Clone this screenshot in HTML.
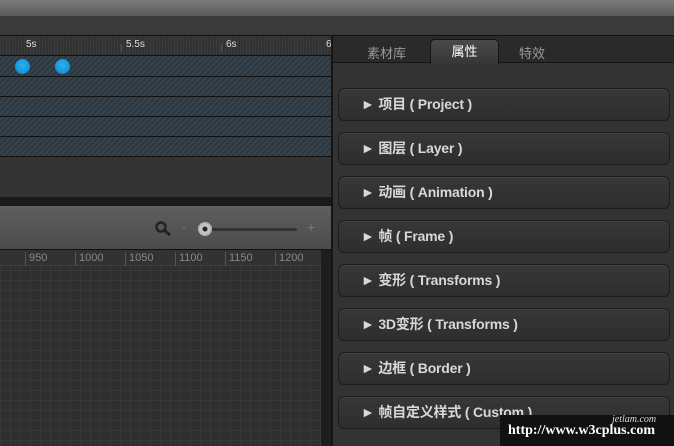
<html><head><style>
body{margin:0;width:674px;height:446px;overflow:hidden;background:#333;font-family:"Liberation Sans","Noto Sans CJK SC",sans-serif;position:relative}
div{position:absolute;box-sizing:border-box}
.hatch{background:repeating-linear-gradient(135deg,#36434d 0 2px,#2d3740 2px 4px)}
.tk{color:#ddd;font-size:10px;top:39px}
.dot{width:15px;height:15px;border-radius:50%;background:radial-gradient(circle at 50% 40%,#2ab0f0,#0a88cc);top:59px}
.acc{left:338px;width:332px;height:33px;border:1px solid #1c1c1c;border-radius:6px;background:linear-gradient(#373737,#2e2e2e);box-shadow:inset 0 1px 0 #444;color:#d8d8d8;font-weight:bold;font-size:14px;line-height:31px;padding-left:22px;letter-spacing:-0.2px}
.r{color:#888;font-size:11px;top:252px;border-left:1px solid #555;padding-left:3px;height:14px;line-height:13px}
</style></head><body>
<div style="left:0;top:0;width:674px;height:16px;background:linear-gradient(#7a7a7a,#5a5a5a)"></div>
<div style="left:0;top:16px;width:674px;height:20px;background:#3a3a3a"></div>
<div style="left:0;top:35px;width:332px;height:21px;background:repeating-linear-gradient(90deg,#3c3c3c 0 1px,#323232 1px 3px);border-top:1px solid #111;border-bottom:1px solid #111"></div>
<div class="tk" style="left:26px">5s</div><div class="tk" style="left:126px">5.5s</div><div class="tk" style="left:226px">6s</div><div class="tk" style="left:326px">6</div>
<div style="left:121px;top:44px;width:1px;height:8px;background:#555"></div>
<div style="left:221px;top:44px;width:1px;height:8px;background:#555"></div>
<div class="hatch" style="left:0;top:56px;width:331px;height:100px"></div>
<div style="left:0;top:76px;width:331px;height:1px;background:#111"></div>
<div style="left:0;top:96px;width:331px;height:1px;background:#111"></div>
<div style="left:0;top:116px;width:331px;height:1px;background:#111"></div>
<div style="left:0;top:136px;width:331px;height:1px;background:#111"></div>
<div style="left:0;top:156px;width:331px;height:1px;background:#111"></div>
<div class="dot" style="left:15px"></div><div class="dot" style="left:55px"></div>
<div style="left:0;top:197px;width:332px;height:9px;background:#1a1a1a"></div>
<div style="left:0;top:206px;width:332px;height:44px;background:linear-gradient(#5e5e5e,#4c4c4c);border-bottom:1px solid #111"></div>
<svg style="position:absolute;left:154px;top:220px" width="20" height="18"><circle cx="7" cy="7" r="4.5" fill="none" stroke="#222" stroke-width="2.5"/><line x1="10" y1="10" x2="16" y2="15" stroke="#222" stroke-width="3"/></svg>
<div style="left:182px;top:220px;color:#777;font-size:12px">-</div>
<div style="left:205px;top:228px;width:92px;height:3px;background:#333;border-radius:2px"></div>
<div style="left:198px;top:222px;width:14px;height:14px;border-radius:50%;background:radial-gradient(#222 0 2px,#ccc 3px,#999)"></div>
<div style="left:307px;top:219px;color:#777;font-size:14px">+</div>
<div style="left:0;top:250px;width:321px;height:196px;background:#2f2f2f;background-image:linear-gradient(#383838 1px,transparent 1px),linear-gradient(90deg,#383838 1px,transparent 1px);background-size:10px 10px"></div>
<div style="left:0;top:250px;width:321px;height:16px;background:#323232;border-bottom:1px solid #3c3c3c"></div>
<div class="r" style="left:25px">950</div><div class="r" style="left:75px">1000</div><div class="r" style="left:125px">1050</div><div class="r" style="left:175px">1100</div><div class="r" style="left:225px">1150</div><div class="r" style="left:275px">1200</div>
<div style="left:321px;top:250px;width:10px;height:196px;background:#1e1e1e"></div>
<div style="left:331px;top:35px;width:2px;height:411px;background:#151515"></div>
<div style="left:333px;top:35px;width:341px;height:28px;background:#2a2a2a;border-top:1px solid #111;border-bottom:1px solid #151515"></div>
<div style="left:367px;top:43px;color:#999;font-size:13px">素材库</div>
<div style="left:430px;top:39px;width:69px;height:25px;border-radius:5px 5px 0 0;background:linear-gradient(#4a4a4a,#363636);border:1px solid #151515;border-bottom:none;color:#fff;font-size:13px;text-align:center;line-height:24px">属性</div>
<div style="left:519px;top:43px;color:#999;font-size:13px">特效</div>
<div class="acc" style="top:88px">► 项目 ( Project )</div>
<div class="acc" style="top:132px">► 图层 ( Layer )</div>
<div class="acc" style="top:176px">► 动画 ( Animation )</div>
<div class="acc" style="top:220px">► 帧 ( Frame )</div>
<div class="acc" style="top:264px">► 变形 ( Transforms )</div>
<div class="acc" style="top:308px">► 3D变形 ( Transforms )</div>
<div class="acc" style="top:352px">► 边框 ( Border )</div>
<div class="acc" style="top:396px">► 帧自定义样式 ( Custom )</div>
<div style="left:500px;top:415px;width:174px;height:31px;background:#111"></div>
<div style="left:612px;top:414px;color:#ddd;font:italic 10px 'Liberation Serif',serif">jetlam.com</div>
<div style="left:508px;top:423px;color:#fff;font:bold 14px 'Liberation Serif',serif">http://www.w3cplus.com</div>
</body></html>
